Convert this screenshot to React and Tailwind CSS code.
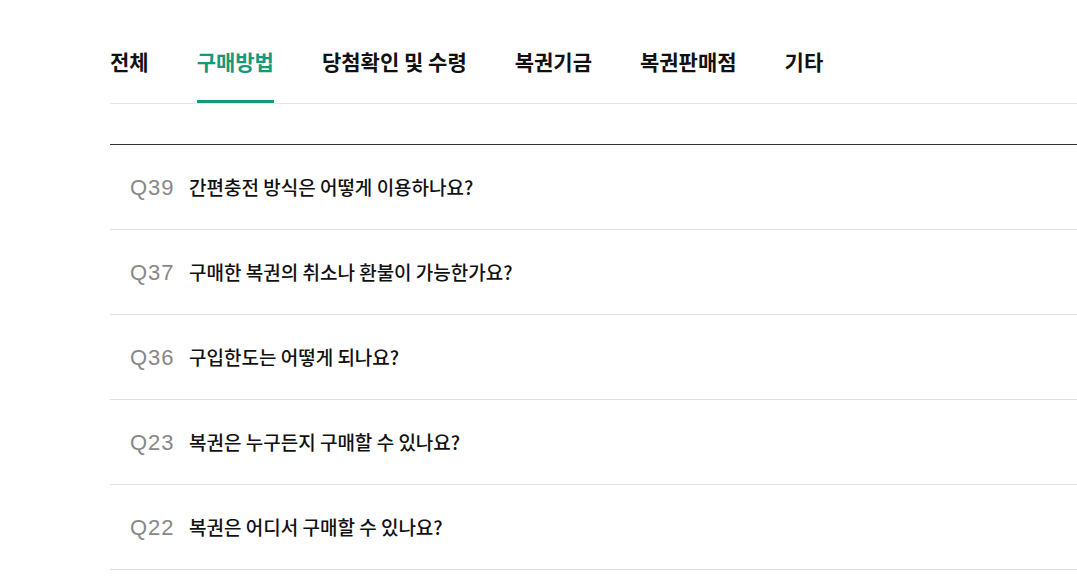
import { useState } from 'react'

const tabs = ['전체', '구매방법', '당첨확인 및 수령', '복권기금', '복권판매점', '기타']

const faqs = [
  { no: 'Q39', title: '간편충전 방식은 어떻게 이용하나요?' },
  { no: 'Q37', title: '구매한 복권의 취소나 환불이 가능한가요?' },
  { no: 'Q36', title: '구입한도는 어떻게 되나요?' },
  { no: 'Q23', title: '복권은 누구든지 구매할 수 있나요?' },
  { no: 'Q22', title: '복권은 어디서 구매할 수 있나요?' },
]

export default function App() {
  const [active, setActive] = useState(1)

  return (
    <div className="h-[580px] w-[1077px] overflow-hidden bg-white pl-[110px] font-['Noto_Sans_CJK_KR',sans-serif]">
      <div className="w-[1000px]">
        {/* tabs */}
        <nav className="flex h-[104px] gap-12 border-b border-[#e5e5e5]">
          {tabs.map((t, i) => (
            <button
              key={t}
              onClick={() => setActive(i)}
              className={`relative flex h-full items-center pt-[20px] text-[21px] font-bold ${
                active === i ? 'text-[#14997d]' : 'text-[#111]'
              }`}
            >
              {t}
              {active === i && (
                <span className="absolute bottom-0 left-0 h-[3px] w-full bg-[#14997d]"></span>
              )}
            </button>
          ))}
        </nav>

        {/* list */}
        <ul className="mt-[40px] border-t border-[#333]">
          {faqs.map((f) => (
            <li key={f.no} className="flex h-[85px] items-center border-b border-[#e0e0e0] pl-[20px]">
              <span className="w-[59px] font-['Liberation_Sans',sans-serif] text-[22px] tracking-[1px] text-[#888]">
                {f.no}
              </span>
              <span className="text-[19px] font-medium text-[#111]">{f.title}</span>
            </li>
          ))}
        </ul>
      </div>
    </div>
  )
}
